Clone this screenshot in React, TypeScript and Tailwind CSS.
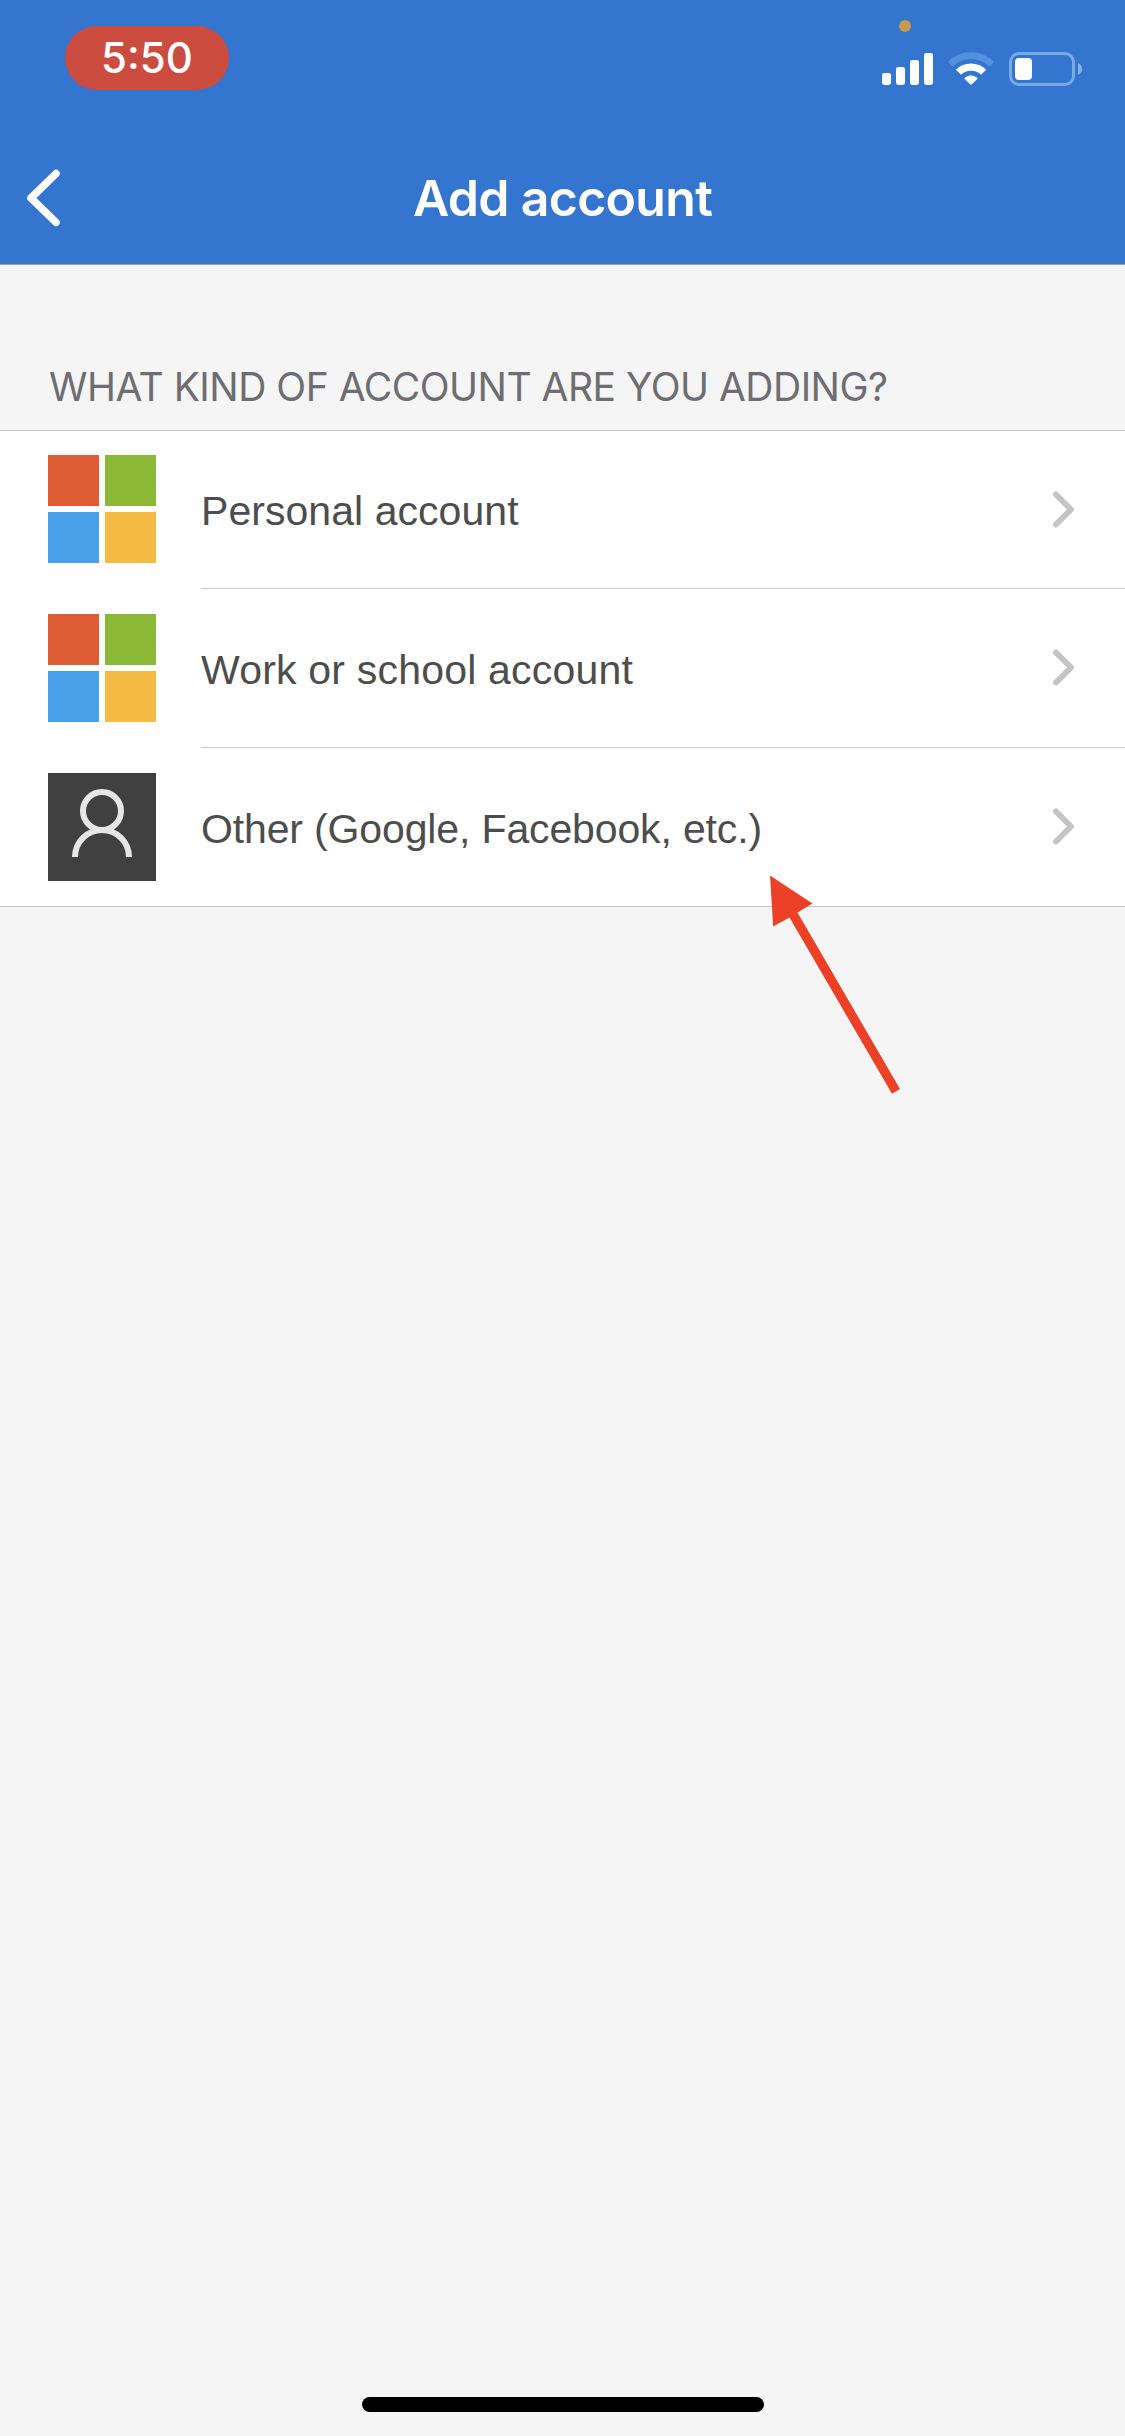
import type { ReactNode } from "react";

function StatusIcons() {
  return (
    <svg width="204" height="76" viewBox="882 16 204 76" fill="none" aria-label="Signal, Wi-Fi and battery">
      <circle cx="905" cy="26" r="6" fill="#c59a4b" />
      <g fill="#fff">
        <rect x="882" y="73" width="9" height="12" rx="2.4" />
        <rect x="896" y="67" width="9" height="18" rx="2.4" />
        <rect x="910" y="60" width="9" height="25" rx="2.4" />
        <rect x="924" y="53" width="9" height="32" rx="2.4" />
        <path d="M971 84.6 L964.6 78.4 A9.2 9.2 0 0 1 977.4 78.4 Z" stroke="#fff" strokeWidth="0.8" strokeLinejoin="round" />
      </g>
      <path d="M958.4 72.3 A17.8 17.8 0 0 1 983.6 72.3" stroke="#fff" strokeWidth="7.2" />
      <path d="M950.3 64.3 A29.2 29.2 0 0 1 991.7 64.3" stroke="#5093db" strokeWidth="6.8" />
      <rect x="1010.5" y="53.5" width="63" height="31" rx="8.5" stroke="#79abe2" strokeWidth="3" />
      <path d="M1078 63 Q1082 65 1082 69 Q1082 73 1078 75 Z" fill="#86b2e5" />
      <rect x="1015" y="58" width="17" height="22" rx="4" fill="#fff" />
    </svg>
  );
}

function MicrosoftLogo() {
  return (
    <div className="grid size-[108px] shrink-0 grid-cols-2 gap-[6px]">
      <div className="bg-[#de5b34]" />
      <div className="bg-[#8bb836]" />
      <div className="bg-[#4a9fe9]" />
      <div className="bg-[#f4bb42]" />
    </div>
  );
}

function PersonIcon() {
  return (
    <div className="size-[108px] shrink-0 bg-[#404040]">
      <svg width="108" height="108" viewBox="0 0 108 108" fill="none" stroke="#e6e6e6" strokeWidth="6">
        <circle cx="54" cy="38" r="19" />
        <path d="M27 84a27 27 0 0 1 54 0" />
      </svg>
    </div>
  );
}

type RowProps = {
  icon: ReactNode;
  children: ReactNode;
  rowClass: string;
  iconClass: string;
  bodyClass: string;
};

function AccountRow({ icon, children, rowClass, iconClass, bodyClass }: RowProps) {
  return (
    <div className={`flex pl-[48px] ${rowClass}`}>
      <div className={iconClass}>{icon}</div>
      <div className={`ml-[45px] flex flex-1 items-center justify-between pr-[50px] ${bodyClass}`}>
        <span className="whitespace-nowrap pt-[3px] font-['Liberation_Sans',sans-serif] text-[41px] leading-[48px] text-[#4d4d4d]">
          {children}
        </span>
        <svg width="22" height="38" viewBox="0 0 22 38" fill="none" stroke="#c5c5c7" strokeWidth="6" strokeLinecap="round" strokeLinejoin="round">
          <path d="M3 3.5 18 18.5 3 33.5" />
        </svg>
      </div>
    </div>
  );
}

export default function App() {
  return (
    <div className="relative flex h-[2436px] w-[1125px] flex-col overflow-hidden bg-[#f5f5f5] font-['Inter',sans-serif]">
      <header className="h-[265px] border-b border-[#9c9fa6] bg-[#3375cf] text-white">
        <div className="flex h-[132px] items-start justify-between pl-[65px] pr-[39px]">
          <div className="mt-[26px] flex h-[64px] w-[164px] items-center justify-center rounded-full bg-[#cc4c3f] text-[42px] font-medium leading-[48px]">
            5:50
          </div>
          <div className="mt-[16px]">
            <StatusIcons />
          </div>
        </div>
        <div className="grid h-[132px] grid-cols-[80px_1fr_80px] items-center">
          <svg className="ml-[27px]" width="34" height="58" viewBox="0 0 34 58" fill="none" stroke="#fff" strokeWidth="7.6" strokeLinecap="round" strokeLinejoin="round">
            <path d="M29 4.6 4 29 29 53.4" />
          </svg>
          <h1 className="text-center text-[50px] font-semibold leading-[60px] tracking-[-0.7px]">Add account</h1>
        </div>
      </header>

      <main>
        <h2 className="h-[165px] whitespace-nowrap pl-[49px] pt-[97px] text-[39px] leading-[50px] tracking-[-0.5px] text-[#6d6d72]">
          WHAT KIND OF ACCOUNT ARE YOU ADDING?
        </h2>
        <section className="border-y border-[#c6c6c8] bg-white">
          <AccountRow
            icon={<MicrosoftLogo />}
            rowClass="h-[158px] tracking-[0.05px]"
            iconClass="pt-[24px]"
            bodyClass="border-b border-[#c6c6c8]"
          >
            Personal account
          </AccountRow>
          <AccountRow
            icon={<MicrosoftLogo />}
            rowClass="h-[159px] tracking-[0.2px]"
            iconClass="pt-[25px]"
            bodyClass="border-b border-[#c6c6c8]"
          >
            Work or school account
          </AccountRow>
          <AccountRow
            icon={<PersonIcon />}
            rowClass="h-[158px] tracking-[-0.14px]"
            iconClass="pt-[25px]"
            bodyClass=""
          >
            Other (Google, Facebook, etc.)
          </AccountRow>
        </section>
      </main>

      <svg className="absolute left-[760px] top-[866px]" width="150" height="240" viewBox="760 866 150 240">
        <path d="M770 875.5 812.5 903.5 797.5 912.5 900 1089 892 1093.8 789.5 917.5 773.2 926.5Z" fill="#ed4127" />
      </svg>

      <div className="mx-auto mb-[24px] mt-auto h-[15px] w-[402px] rounded-full bg-black" />
    </div>
  );
}
